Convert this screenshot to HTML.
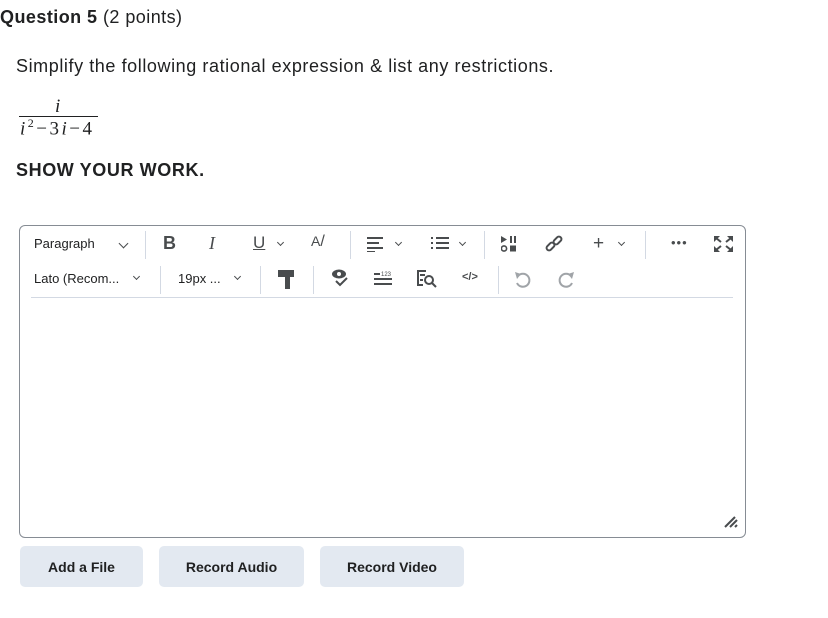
<!DOCTYPE html>
<html><head><meta charset="utf-8"><style>
*{margin:0;padding:0;box-sizing:border-box}
body{width:828px;height:618px;background:#fff;font-family:"Liberation Sans",sans-serif;color:#202122;position:relative;overflow:hidden}
.a{position:absolute;white-space:nowrap}
.ed{position:absolute;left:19px;top:225px;width:727px;height:313px;border:1px solid #868c94;border-radius:6px}
.sep{position:absolute;width:1px;background:#d3d9e3}
.btn{position:absolute;top:546px;height:41px;background:#e3e9f1;border-radius:5px;font-weight:bold;font-size:14px;display:flex;align-items:center;justify-content:center;color:#202122}
.t{font-size:13px;color:#202122}
.ch{position:absolute;width:7px;height:7px;border-right:1.5px solid #494c4e;border-bottom:1.5px solid #494c4e;transform:rotate(45deg)}
</style></head><body>
<div class="a" style="left:0;top:7px;font-size:18px;letter-spacing:0.45px"><b>Question 5</b> (2 points)</div>
<div class="a" style="left:16px;top:56px;font-size:18px;letter-spacing:0.58px">Simplify the following rational expression &amp; list any restrictions.</div>
<div class="a" style="left:55px;top:96px;font-family:'Liberation Serif',serif;font-style:italic;font-size:19px">i</div>
<div class="a" style="left:19px;top:116px;width:79px;height:1px;background:#202122"></div>
<div class="a" style="left:20px;top:116px;font-family:'Liberation Serif',serif;font-size:19px;letter-spacing:2.5px"><i>i</i><sup style="font-size:12px">2</sup>−3<i>i</i>−4</div>
<div class="a" style="left:16px;top:160px;font-size:18px;font-weight:bold;letter-spacing:0.6px">SHOW YOUR WORK.</div>

<div class="ed"></div>
<div class="a" style="left:31px;top:297px;width:702px;height:1px;background:#d3d9e3"></div>
<!-- row1 -->
<div class="a t" style="left:34px;top:236px">Paragraph</div><div class="ch" style="left:120px;top:240px"></div>
<div class="sep" style="left:145px;top:231px;height:28px"></div>
<div class="a" style="left:163px;top:233px;font-size:18px;font-weight:bold;color:#494c4e">B</div>
<div class="a" style="left:209px;top:233px;font-size:18px;font-style:italic;font-family:'Liberation Serif',serif;color:#494c4e">I</div>
<div class="a" style="left:253px;top:233px;font-size:17px;text-decoration:underline;color:#494c4e">U</div><div class="ch" style="left:278px;top:240px;width:5px;height:5px"></div>
<div class="a" style="left:311px;top:233px;font-size:14px;color:#494c4e">A<span style="font-size:16px">/</span></div>
<div class="sep" style="left:350px;top:231px;height:28px"></div>
<svg class="a" style="left:367px;top:236px" width="18" height="16"><g stroke="#494c4e" stroke-width="2"><line x1="0" y1="2" x2="16" y2="2"/><line x1="0" y1="7" x2="12" y2="7"/><line x1="0" y1="12" x2="16" y2="12"/><line x1="0" y1="16" x2="8" y2="16"/></g></svg>
<div class="ch" style="left:396px;top:240px;width:5px;height:5px"></div>
<svg class="a" style="left:431px;top:236px" width="18" height="16"><g stroke="#494c4e" stroke-width="2"><line x1="0" y1="2" x2="2" y2="2"/><line x1="5" y1="2" x2="18" y2="2"/><line x1="0" y1="7" x2="2" y2="7"/><line x1="5" y1="7" x2="18" y2="7"/><line x1="0" y1="12" x2="2" y2="12"/><line x1="5" y1="12" x2="18" y2="12"/></g></svg>
<div class="ch" style="left:460px;top:240px;width:5px;height:5px"></div>
<div class="sep" style="left:484px;top:231px;height:28px"></div>
<svg class="a" style="left:501px;top:236px" width="16" height="16"><path d="M0 0L6 3.5L0 7Z" fill="#494c4e"/><rect x="9" y="0" width="2" height="7" fill="#494c4e"/><rect x="13" y="0" width="2" height="7" fill="#494c4e"/><circle cx="3" cy="12.5" r="2.6" fill="none" stroke="#494c4e" stroke-width="1.6"/><rect x="9" y="9.5" width="6" height="6" fill="#494c4e"/></svg>
<svg class="a" style="left:545px;top:235px" width="18" height="18"><g fill="none" stroke="#494c4e" stroke-width="2"><rect x="1" y="9" width="9" height="5" rx="2.5" transform="rotate(-45 5.5 11.5)"/><rect x="8" y="3" width="9" height="5" rx="2.5" transform="rotate(-45 12.5 5.5)"/></g></svg>
<div class="a" style="left:593px;top:233px;font-size:19px;color:#494c4e">+</div><div class="ch" style="left:619px;top:240px;width:5px;height:5px"></div>
<div class="sep" style="left:645px;top:231px;height:28px"></div>
<div class="a" style="left:671px;top:235px;font-size:13px;color:#494c4e;letter-spacing:1px">•••</div>
<svg class="a" style="left:714px;top:236px" width="19" height="16"><g fill="#494c4e"><path d="M0 0H6L0 6Z"/><path d="M19 0H13L19 6Z"/><path d="M0 16H6L0 10Z"/><path d="M19 16H13L19 10Z"/></g><g stroke="#494c4e" stroke-width="2"><line x1="2" y1="2" x2="7" y2="6"/><line x1="17" y1="2" x2="12" y2="6"/><line x1="2" y1="14" x2="7" y2="10"/><line x1="17" y1="14" x2="12" y2="10"/></g></svg>
<!-- row2 -->
<div class="a t" style="left:34px;top:271px">Lato (Recom...</div><div class="ch" style="left:134px;top:274px;width:5px;height:5px"></div>
<div class="sep" style="left:160px;top:266px;height:28px"></div>
<div class="a t" style="left:178px;top:271px">19px ...</div><div class="ch" style="left:235px;top:274px;width:5px;height:5px"></div>
<div class="sep" style="left:260px;top:266px;height:28px"></div>
<svg class="a" style="left:278px;top:270px" width="18" height="19"><rect x="0" y="0" width="16" height="7" fill="#494c4e"/><rect x="7" y="7" width="5" height="12" fill="#494c4e"/></svg>
<div class="sep" style="left:313px;top:266px;height:28px"></div>
<svg class="a" style="left:331px;top:269px" width="18" height="18"><ellipse cx="8" cy="5" rx="7" ry="4.5" fill="#494c4e"/><circle cx="8" cy="5" r="2" fill="#fff"/><path d="M5 12L9 16L16 9" fill="none" stroke="#494c4e" stroke-width="2"/></svg>
<svg class="a" style="left:374px;top:270px" width="20" height="16"><text x="7" y="6" font-size="6" fill="#494c4e" font-family="Liberation Sans">123</text><g stroke="#494c4e" stroke-width="2"><line x1="0" y1="4" x2="6" y2="4"/><line x1="0" y1="9" x2="18" y2="9"/><line x1="0" y1="14" x2="18" y2="14"/></g></svg>
<svg class="a" style="left:417px;top:270px" width="20" height="18"><g fill="none" stroke="#494c4e" stroke-width="2"><path d="M9 1H1V15H6"/><line x1="3" y1="5" x2="8" y2="5"/><line x1="3" y1="10" x2="6" y2="10"/><circle cx="12" cy="10" r="4"/><line x1="15" y1="13" x2="19" y2="17"/></g></svg>
<div class="a" style="left:462px;top:271px;font-size:11px;font-weight:bold;color:#494c4e">&lt;/&gt;</div>
<div class="sep" style="left:498px;top:266px;height:28px"></div>
<svg class="a" style="left:514px;top:271px" width="18" height="18"><path d="M4 5A6.5 6.5 0 1 1 3 12" fill="none" stroke="#a0a4a8" stroke-width="2"/><path d="M1 1L7 3L3 8Z" fill="#a0a4a8"/></svg>
<svg class="a" style="left:558px;top:271px" width="18" height="18"><path d="M13 5A6.5 6.5 0 1 0 14 12" fill="none" stroke="#a0a4a8" stroke-width="2"/><path d="M16 1L10 3L14 8Z" fill="#a0a4a8"/></svg>
<svg class="a" style="left:724px;top:515px" width="16" height="14"><g stroke="#494c4e" stroke-width="2"><line x1="1" y1="12" x2="11" y2="2"/><line x1="6" y1="12" x2="13" y2="5"/><line x1="11" y1="12" x2="13" y2="10"/></g></svg>

<div class="btn" style="left:20px;width:123px">Add a File</div>
<div class="btn" style="left:159px;width:145px">Record Audio</div>
<div class="btn" style="left:320px;width:144px">Record Video</div>
</body></html>
